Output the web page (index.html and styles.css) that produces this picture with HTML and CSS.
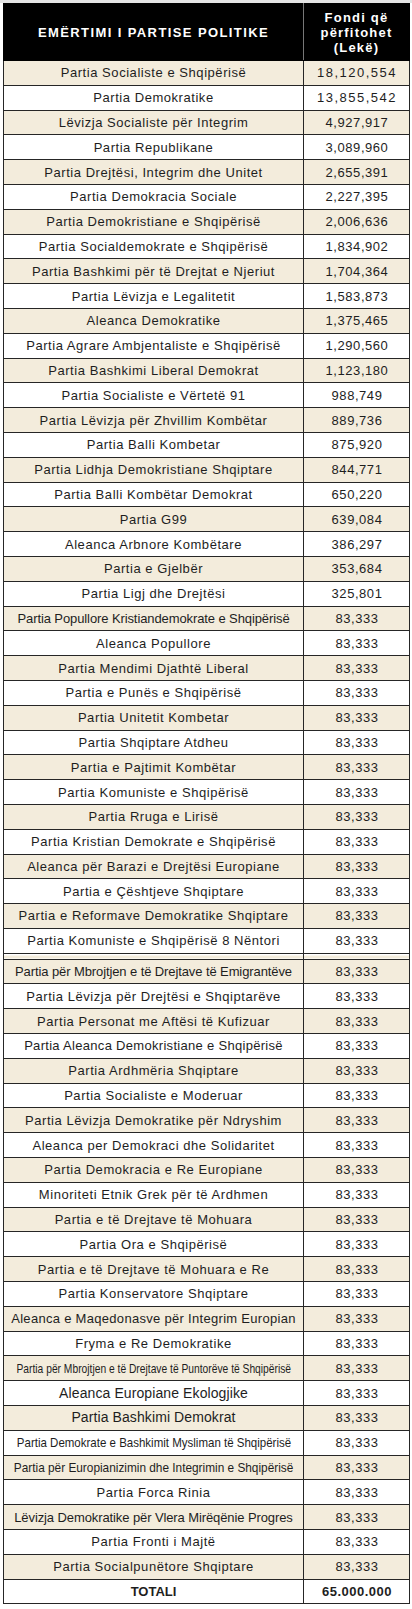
FILE: index.html
```html
<!DOCTYPE html>
<html lang="sq">
<head>
<meta charset="utf-8">
<title>Fondi për partitë politike</title>
<link rel="stylesheet" href="styles.css">
</head>
<body>
<div class="topband"></div>
<table class="fund">
  <colgroup><col class="c-name"><col class="c-val"></colgroup>
  <thead>
    <tr class="head">
      <th class="h-name">EMËRTIMI I PARTISE POLITIKE</th>
      <th class="h-val">Fondi që<br>përfitohet<br>(Lekë)</th>
    </tr>
  </thead>
  <tbody class="part">
    <tr><td>Partia Socialiste e Shqipërisë</td><td class="v wide">18,120,554</td></tr>
    <tr><td>Partia Demokratike</td><td class="v wide">13,855,542</td></tr>
    <tr><td>Lëvizja Socialiste për Integrim</td><td class="v">4,927,917</td></tr>
    <tr><td>Partia Republikane</td><td class="v">3,089,960</td></tr>
    <tr><td>Partia Drejtësi, Integrim dhe Unitet</td><td class="v">2,655,391</td></tr>
    <tr><td>Partia Demokracia Sociale</td><td class="v">2,227,395</td></tr>
    <tr><td>Partia Demokristiane e Shqipërisë</td><td class="v">2,006,636</td></tr>
    <tr><td>Partia Socialdemokrate e Shqipërisë</td><td class="v">1,834,902</td></tr>
    <tr><td>Partia Bashkimi për të Drejtat e Njeriut</td><td class="v">1,704,364</td></tr>
    <tr><td>Partia Lëvizja e Legalitetit</td><td class="v">1,583,873</td></tr>
    <tr><td>Aleanca Demokratike</td><td class="v">1,375,465</td></tr>
    <tr><td>Partia Agrare Ambjentaliste e Shqipërisë</td><td class="v">1,290,560</td></tr>
    <tr><td>Partia Bashkimi Liberal Demokrat</td><td class="v">1,123,180</td></tr>
    <tr><td>Partia Socialiste e Vërtetë 91</td><td class="v">988,749</td></tr>
    <tr><td>Partia Lëvizja për Zhvillim Kombëtar</td><td class="v">889,736</td></tr>
    <tr><td>Partia Balli Kombetar</td><td class="v">875,920</td></tr>
    <tr><td>Partia Lidhja Demokristiane Shqiptare</td><td class="v">844,771</td></tr>
    <tr><td>Partia Balli Kombëtar Demokrat</td><td class="v">650,220</td></tr>
    <tr><td>Partia G99</td><td class="v">639,084</td></tr>
    <tr><td>Aleanca Arbnore Kombëtare</td><td class="v">386,297</td></tr>
    <tr><td>Partia e Gjelbër</td><td class="v">353,684</td></tr>
    <tr><td>Partia Ligj dhe Drejtësi</td><td class="v">325,801</td></tr>
    <tr><td class="tight">Partia Popullore Kristiandemokrate e Shqipërisë</td><td class="v">83,333</td></tr>
    <tr><td>Aleanca Popullore</td><td class="v">83,333</td></tr>
    <tr><td>Partia Mendimi Djathtë Liberal</td><td class="v">83,333</td></tr>
    <tr><td>Partia e Punës e Shqipërisë</td><td class="v">83,333</td></tr>
    <tr><td>Partia Unitetit Kombetar</td><td class="v">83,333</td></tr>
    <tr><td>Partia Shqiptare Atdheu</td><td class="v">83,333</td></tr>
    <tr><td>Partia e Pajtimit Kombëtar</td><td class="v">83,333</td></tr>
    <tr><td>Partia Komuniste e Shqipërisë</td><td class="v">83,333</td></tr>
    <tr><td>Partia Rruga e Lirisë</td><td class="v">83,333</td></tr>
    <tr><td>Partia Kristian Demokrate e Shqipërisë</td><td class="v">83,333</td></tr>
    <tr><td>Aleanca për Barazi e Drejtësi Europiane</td><td class="v">83,333</td></tr>
    <tr><td>Partia e Çështjeve Shqiptare</td><td class="v">83,333</td></tr>
    <tr><td>Partia e Reformave Demokratike Shqiptare</td><td class="v">83,333</td></tr>
    <tr><td>Partia Komuniste e Shqipërisë 8 Nëntori</td><td class="v">83,333</td></tr>
  </tbody>
  <tbody class="gap">
    <tr><td></td><td></td></tr>
  </tbody>
  <tbody class="part">
    <tr><td class="tight">Partia për Mbrojtjen e të Drejtave të Emigrantëve</td><td class="v">83,333</td></tr>
    <tr><td>Partia Lëvizja për Drejtësi e Shqiptarëve</td><td class="v">83,333</td></tr>
    <tr><td>Partia Personat me Aftësi të Kufizuar</td><td class="v">83,333</td></tr>
    <tr><td class="semi">Partia Aleanca Demokristiane e Shqipërisë</td><td class="v">83,333</td></tr>
    <tr><td>Partia Ardhmëria Shqiptare</td><td class="v">83,333</td></tr>
    <tr><td>Partia Socialiste e Moderuar</td><td class="v">83,333</td></tr>
    <tr><td>Partia Lëvizja Demokratike për Ndryshim</td><td class="v">83,333</td></tr>
    <tr><td>Aleanca per Demokraci dhe Solidaritet</td><td class="v">83,333</td></tr>
    <tr><td>Partia Demokracia e Re Europiane</td><td class="v">83,333</td></tr>
    <tr><td>Minoriteti Etnik Grek për të Ardhmen</td><td class="v">83,333</td></tr>
    <tr><td>Partia e të Drejtave të Mohuara</td><td class="v">83,333</td></tr>
    <tr><td>Partia Ora e Shqipërisë</td><td class="v">83,333</td></tr>
    <tr><td>Partia e të Drejtave të Mohuara e Re</td><td class="v">83,333</td></tr>
    <tr><td>Partia Konservatore Shqiptare</td><td class="v">83,333</td></tr>
    <tr><td class="semi">Aleanca e Maqedonasve për Integrim Europian</td><td class="v">83,333</td></tr>
    <tr><td>Fryma e Re Demokratike</td><td class="v">83,333</td></tr>
    <tr><td><span class="cond cond-79">Partia për Mbrojtjen e të Drejtave të Puntorëve të Shqipërisë</span></td><td class="v">83,333</td></tr>
    <tr><td class="big">Aleanca Europiane Ekologjike</td><td class="v">83,333</td></tr>
    <tr><td class="big">Partia Bashkimi Demokrat</td><td class="v">83,333</td></tr>
    <tr><td><span class="cond cond-88">Partia Demokrate e Bashkimit Mysliman të Shqipërisë</span></td><td class="v">83,333</td></tr>
    <tr><td><span class="cond cond-91">Partia për Europianizimin dhe Integrimin e Shqipërisë</span></td><td class="v">83,333</td></tr>
    <tr><td>Partia Forca Rinia</td><td class="v">83,333</td></tr>
    <tr><td class="tight">Lëvizja Demokratike për Vlera Mirëqënie Progres</td><td class="v">83,333</td></tr>
    <tr><td>Partia Fronti i Majtë</td><td class="v">83,333</td></tr>
    <tr><td>Partia Socialpunëtore Shqiptare</td><td class="v">83,333</td></tr>
    <tr class="total"><td class="t-label">TOTALI</td><td class="v t-val">65.000.000</td></tr>
  </tbody>
</table>
</body>
</html>
```

FILE: styles.css
```css
html, body {
  margin: 0;
  padding: 0;
  background: #ffffff;
}

body {
  font-family: "Liberation Sans", Arial, sans-serif;
  color: #1e1e1e;
}

.topband {
  height: 3px;
  background: #e4e4e4;
}

.fund {
  margin-left: 3px;
  width: 406px;
  border-collapse: collapse;
  table-layout: fixed;
}

.c-name { width: 300px; }
.c-val { width: 106px; }

.fund td,
.fund th {
  border: 1px solid #262626;
  padding: 0;
  text-align: center;
  vertical-align: middle;
  white-space: nowrap;
  overflow: hidden;
}

.head th {
  background: #000000;
  color: #ffffff;
  font-weight: bold;
  font-size: 13px;
  height: 56px;
  border-color: #000000;
}

.head .h-name {
  letter-spacing: 1.4px;
  border-right-color: #777777;
}

.head .h-val {
  letter-spacing: 1.2px;
  line-height: 15px;
}

.part tr {
  height: 24.8px;
}

.part tr:nth-child(odd) td {
  background: #f3ecdc;
}

.part tr:nth-child(even) td {
  background: #ffffff;
}

.part td {
  font-size: 13px;
  letter-spacing: 0.55px;
  line-height: 15px;
}

.part td.tight {
  letter-spacing: -0.1px;
}

.part td.semi {
  letter-spacing: 0.3px;
}

.part td.big {
  font-size: 14px;
  letter-spacing: 0.1px;
}

.cond {
  display: inline-block;
  margin: 0 -60px;
  letter-spacing: 0;
  transform-origin: center center;
}

.cond-79 { transform: scaleX(0.79); }
.cond-88 { transform: scaleX(0.885); }
.cond-91 { transform: scaleX(0.91); }

.part td.v {
  letter-spacing: 0.55px;
  padding-left: 1px;
}

.part td.v.wide {
  letter-spacing: 1.5px;
}

.gap tr {
  height: 6px;
}

.gap td {
  background: linear-gradient(#ffffff 0, #ffffff 50%, #f3ecdc 50%, #f3ecdc 100%);
  border-top-color: #262626;
}

.part .total td {
  font-weight: bold;
  background: #ffffff;
}

.part .total .t-label {
  letter-spacing: 0;
}

.part .total .t-val {
  letter-spacing: 0.5px;
}
```
